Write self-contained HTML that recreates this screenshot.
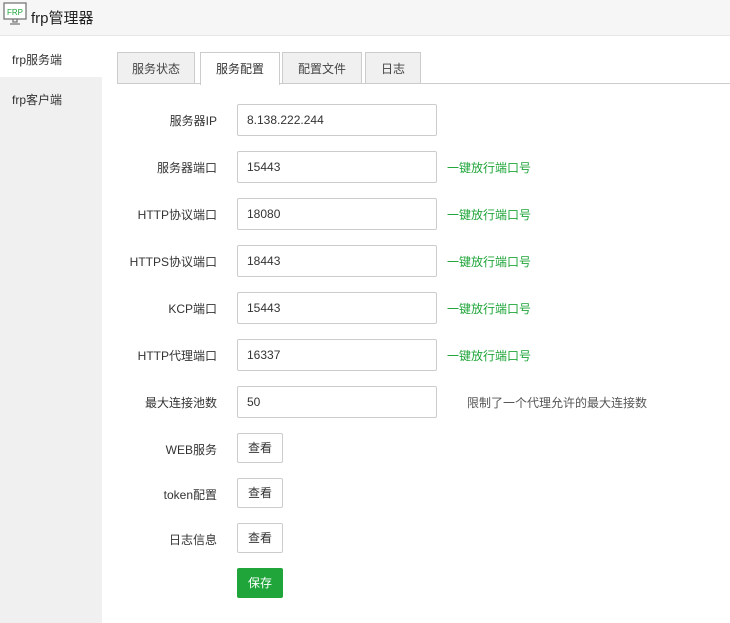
<!DOCTYPE html>
<html><head><meta charset="utf-8"><style>
*{box-sizing:border-box;margin:0;padding:0}
body{width:730px;height:623px;background:#fff;font-family:"Liberation Sans","Noto Sans CJK SC",sans-serif;font-size:12px;color:#333;position:relative;overflow:hidden}
.hdr{position:absolute;left:0;top:0;width:730px;height:36px;background:#f6f6f6;border-bottom:1px solid #e6e6e6}
.hdr .t{position:absolute;left:31px;top:7px;font-size:15px;color:#222}
.side{position:absolute;left:0;top:37px;width:102px;height:586px;background:#f0f0f0}
.side .a{height:40px;background:#fff;padding:14px 0 0 12px}
.side .b{padding:14px 0 0 12px}
.tabs{position:absolute;left:117px;top:83px;width:613px;border-top:1px solid #ccc}
.tab{position:absolute;top:52px;height:31px;background:#f0f0f0;border:1px solid #ccc;border-bottom:none;text-align:center;line-height:32px;font-size:12px;color:#444}
.tab.on{background:#fff;height:33px;color:#333}
.lbl{position:absolute;width:120px;left:97px;text-align:right;font-size:12px;color:#333}
.inp{position:absolute;left:237px;width:200px;height:32px;border:1px solid #ccc;border-radius:2px;padding-left:9px;line-height:30px;font-size:12px}
.lnk{position:absolute;left:447px;color:#20a53a;font-size:12px}
.btn{position:absolute;left:237px;width:46px;height:30px;border:1px solid #ccc;border-radius:2px;text-align:center;line-height:28px;background:#fff}
.save{background:#20a53a;border-color:#20a53a;color:#fff}
</style></head><body>
<div class="hdr">
<svg style="position:absolute;left:3px;top:2px" width="24" height="24" viewBox="0 0 24 24"><rect x="1" y="1" width="22" height="16" fill="#fff" stroke="#777" stroke-width="1.3"/><text x="12" y="13" font-size="8" text-anchor="middle" fill="#20a53a" font-family="Liberation Sans">FRP</text><path d="M10 17v3h4v-3M7 22h10" stroke="#777" stroke-width="1.3" fill="none"/></svg>
<div class="t">frp管理器</div></div>
<div class="side"><div class="a">frp服务端</div><div class="b">frp客户端</div></div>
<div class="tabs"></div>
<div class="tab" style="left:117px;width:78px">服务状态</div>
<div class="tab on" style="left:200px;width:80px">服务配置</div>
<div class="tab" style="left:282px;width:80px">配置文件</div>
<div class="tab" style="left:365px;width:56px">日志</div>

<div class="lbl" style="top:112px">服务器IP</div><div class="inp" style="top:104px">8.138.222.244</div>
<div class="lbl" style="top:159px">服务器端口</div><div class="inp" style="top:151px">15443</div><div class="lnk" style="top:159px">一键放行端口号</div>
<div class="lbl" style="top:206px">HTTP协议端口</div><div class="inp" style="top:198px">18080</div><div class="lnk" style="top:206px">一键放行端口号</div>
<div class="lbl" style="top:253px">HTTPS协议端口</div><div class="inp" style="top:245px">18443</div><div class="lnk" style="top:253px">一键放行端口号</div>
<div class="lbl" style="top:300px">KCP端口</div><div class="inp" style="top:292px">15443</div><div class="lnk" style="top:300px">一键放行端口号</div>
<div class="lbl" style="top:347px">HTTP代理端口</div><div class="inp" style="top:339px">16337</div><div class="lnk" style="top:347px">一键放行端口号</div>
<div class="lbl" style="top:394px">最大连接池数</div><div class="inp" style="top:386px">50</div><div class="lnk" style="top:394px;left:467px;color:#555">限制了一个代理允许的最大连接数</div>
<div class="lbl" style="top:441px">WEB服务</div><div class="btn" style="top:433px">查看</div>
<div class="lbl" style="top:486px">token配置</div><div class="btn" style="top:478px">查看</div>
<div class="lbl" style="top:531px">日志信息</div><div class="btn" style="top:523px">查看</div>
<div class="btn save" style="top:568px">保存</div>
</body></html>
